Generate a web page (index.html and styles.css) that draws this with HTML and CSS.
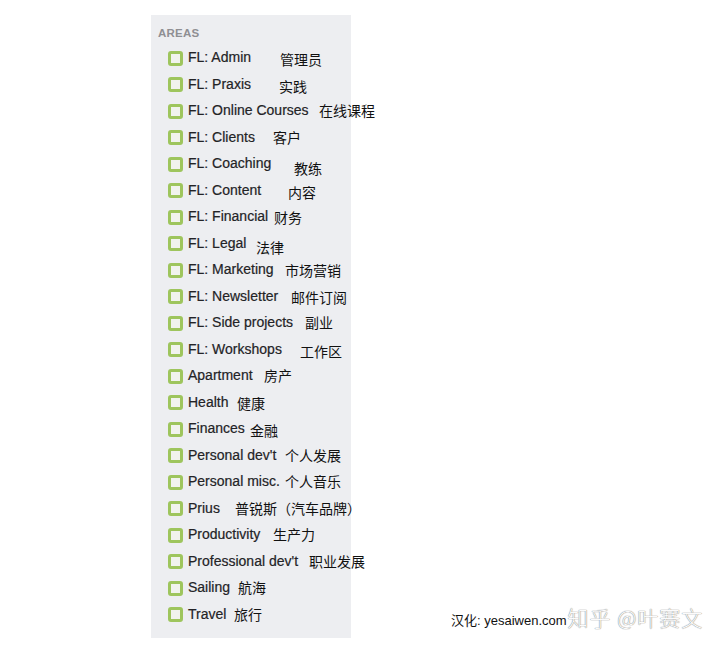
FILE: index.html
```html
<!DOCTYPE html>
<html lang="zh">
<head>
<meta charset="utf-8">
<title>Areas</title>
<link rel="stylesheet" href="styles.css">
</head>
<body>
<div class="page">
  <aside class="panel">
    <div class="title">AREAS</div>
    <ul class="list">
      <li class="row"><span class="box"></span><span class="label">FL: Admin</span><span class="note" style="--x:129px;--dy:2px">管理员</span></li>
      <li class="row"><span class="box"></span><span class="label">FL: Praxis</span><span class="note" style="--x:128px;--dy:2px">实践</span></li>
      <li class="row"><span class="box"></span><span class="label">FL: Online Courses</span><span class="note" style="--x:168px;--dy:0px">在线课程</span></li>
      <li class="row"><span class="box"></span><span class="label">FL: Clients</span><span class="note" style="--x:122px;--dy:0px">客户</span></li>
      <li class="row"><span class="box"></span><span class="label">FL: Coaching</span><span class="note" style="--x:143px;--dy:5px">教练</span></li>
      <li class="row"><span class="box"></span><span class="label">FL: Content</span><span class="note" style="--x:137px;--dy:2px">内容</span></li>
      <li class="row"><span class="box"></span><span class="label">FL: Financial</span><span class="note" style="--x:123px;--dy:1px">财务</span></li>
      <li class="row"><span class="box"></span><span class="label">FL: Legal</span><span class="note" style="--x:105px;--dy:4px">法律</span></li>
      <li class="row"><span class="box"></span><span class="label">FL: Marketing</span><span class="note" style="--x:134px;--dy:1px">市场营销</span></li>
      <li class="row"><span class="box"></span><span class="label">FL: Newsletter</span><span class="note" style="--x:140px;--dy:1px">邮件订阅</span></li>
      <li class="row"><span class="box"></span><span class="label">FL: Side projects</span><span class="note" style="--x:154px;--dy:0px">副业</span></li>
      <li class="row"><span class="box"></span><span class="label">FL: Workshops</span><span class="note" style="--x:149px;--dy:2px">工作区</span></li>
      <li class="row"><span class="box"></span><span class="label">Apartment</span><span class="note" style="--x:113px;--dy:0px">房产</span></li>
      <li class="row"><span class="box"></span><span class="label">Health</span><span class="note" style="--x:86px;--dy:1px">健康</span></li>
      <li class="row"><span class="box"></span><span class="label">Finances</span><span class="note" style="--x:99px;--dy:2px">金融</span></li>
      <li class="row"><span class="box"></span><span class="label">Personal dev't</span><span class="note" style="--x:134px;--dy:0px">个人发展</span></li>
      <li class="row"><span class="box"></span><span class="label">Personal misc.</span><span class="note" style="--x:134px;--dy:0px">个人音乐</span></li>
      <li class="row"><span class="box"></span><span class="label">Prius</span><span class="note" style="--x:84px;--dy:0px">普锐斯（汽车品牌）</span></li>
      <li class="row"><span class="box"></span><span class="label">Productivity</span><span class="note" style="--x:122px;--dy:0px">生产力</span></li>
      <li class="row"><span class="box"></span><span class="label">Professional dev't</span><span class="note" style="--x:158px;--dy:0px">职业发展</span></li>
      <li class="row"><span class="box"></span><span class="label">Sailing</span><span class="note" style="--x:87px;--dy:0px">航海</span></li>
      <li class="row"><span class="box"></span><span class="label">Travel</span><span class="note" style="--x:83px;--dy:0px">旅行</span></li>
    </ul>
  </aside>
  <div class="watermark">
    <span class="credit">汉化: yesaiwen.com</span><span class="brand">知乎 @叶赛文</span>
  </div>
</div>
</body>
</html>
```

FILE: styles.css
```css
html, body {
  margin: 0;
  padding: 0;
  background: #ffffff;
}

.page {
  position: relative;
  width: 720px;
  height: 646px;
  box-sizing: border-box;
  padding-top: 15px;
  font-family: "Liberation Sans", "Noto Sans CJK SC", sans-serif;
}

.panel {
  margin-left: 151px;
  width: 200px;
  height: 623px;
  box-sizing: border-box;
  background: #edeef1;
  padding-top: 11px;
}

.title {
  padding-left: 7px;
  height: 14px;
  line-height: 14px;
  font-size: 11.5px;
  font-weight: bold;
  color: #8f8f93;
  letter-spacing: 0.2px;
}

.list {
  list-style: none;
  margin: 4px 0 0;
  padding: 0;
}

.row {
  position: relative;
  display: flex;
  align-items: center;
  height: 26.5px;
  padding-left: 17px;
}

.box {
  flex: none;
  width: 15px;
  height: 15px;
  box-sizing: border-box;
  border: 3px solid #9ec55d;
  border-radius: 3px;
  background: #f1f3ee;
  margin-top: 2px;
}

.label {
  margin-left: 5px;
  font-size: 14px;
  color: #232326;
  white-space: nowrap;
  -webkit-text-stroke: 0.2px #232326;
}

.note {
  position: absolute;
  left: var(--x);
  top: var(--dy);
  height: 26.5px;
  line-height: 26.5px;
  font-family: "Noto Sans CJK SC", sans-serif;
  font-size: 14px;
  color: #111111;
  white-space: nowrap;
}

.watermark {
  position: absolute;
  left: 451px;
  top: 604px;
  display: flex;
  align-items: center;
  height: 26px;
  white-space: nowrap;
}

.credit {
  font-family: "Liberation Sans", "Noto Sans CJK SC", sans-serif;
  font-size: 13px;
  color: #111111;
  margin-top: 4px;
}

.brand {
  margin-left: 1px;
  font-family: "Noto Sans CJK SC", sans-serif;
  font-size: 21px;
  font-weight: 300;
  color: #fbfbfb;
  text-shadow: 0 0 1px #888, 0 0 1px #888;
  letter-spacing: 1px;
}
```
